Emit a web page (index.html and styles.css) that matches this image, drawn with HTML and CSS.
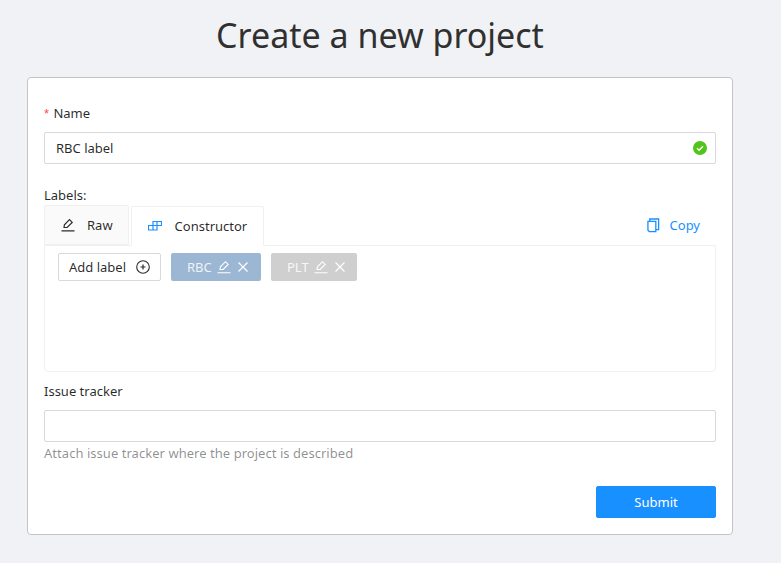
FILE: index.html

```html
<!DOCTYPE html>
<html lang="en">
<head>
  <meta charset="UTF-8">
  <title>Create a new project</title>
  <link rel="stylesheet" href="styles.css">
</head>
<body>
  <div class="page">
    <h1 class="title">Create a new project</h1>
    <form class="card">
      <div class="field-label name-label"><span class="req">*</span> Name</div>
      <div class="input-wrap">
        <input class="input" type="text" value="RBC label">
        <span class="check">
          <svg viewBox="0 0 14 14" width="14" height="14"><circle cx="7" cy="7" r="7" fill="#52c41a"/><path d="M4 7.2l2.1 2.1L10 5.2" fill="none" stroke="#fff" stroke-width="1.4"/></svg>
        </span>
      </div>

      <div class="field-label labels-label">Labels:</div>
      <div class="tabs">
        <div class="tab tab-raw">
          <svg class="tab-icon" viewBox="0 0 14 14" width="14" height="14"><path d="M3 9.500l.4-2.700L8.500 1.700l2.700 2.700-5.100 5.100zM.5 12.800h13" fill="none" stroke="#2b2b2b" stroke-width="1.200"/></svg>
          Raw
        </div>
        <div class="tab active">
          <svg class="tab-icon" viewBox="0 0 14 14" width="14" height="14"><path d="M5 2.500h4v4H5zM9 2.500h4.500v4H9zM.5 6.500H5v4.500H.5zM5 6.500h4v4.500H5z" fill="none" stroke="#1890ff" stroke-width="1.200"/></svg>
          Constructor
        </div>
        <a class="copy" href="#">
          <svg viewBox="0 0 14 16" width="13" height="15"><path d="M1 3.500h8.500v11H2.500L1 13zM3 3.500V1h9.500v11.500h-3" fill="none" stroke="#1890ff" stroke-width="1.400"/></svg>
          Copy
        </a>
      </div>
      <div class="tab-body">
        <button class="add-label" type="button">
          Add label
          <svg viewBox="0 0 14 14" width="14" height="14"><circle cx="7" cy="7" r="6.300" fill="none" stroke="#2b2b2b" stroke-width="1.100"/><path d="M7 4.500v5M4.500 7h5" stroke="#2b2b2b" stroke-width="1.200"/></svg>
        </button>
        <div class="chip chip-rbc">
          RBC
          <svg viewBox="0 0 14 14" width="14" height="14"><path d="M3 9.500l.4-2.700L8.500 1.700l2.700 2.700-5.100 5.100zM.5 12.800h13" fill="none" stroke="#fff" stroke-width="1.100"/></svg>
          <svg class="x" viewBox="0 0 12 12" width="12" height="12"><path d="M1.500 1.500l9 9M10.500 1.500l-9 9" stroke="#fff" stroke-width="1.200"/></svg>
        </div>
        <div class="chip chip-plt">
          PLT
          <svg viewBox="0 0 14 14" width="14" height="14"><path d="M3 9.500l.4-2.700L8.500 1.700l2.700 2.700-5.100 5.100zM.5 12.800h13" fill="none" stroke="#fff" stroke-width="1.100"/></svg>
          <svg class="x" viewBox="0 0 12 12" width="12" height="12"><path d="M1.500 1.500l9 9M10.500 1.500l-9 9" stroke="#fff" stroke-width="1.200"/></svg>
        </div>
      </div>

      <div class="field-label tracker-label">Issue tracker</div>
      <input class="input" type="text">
      <div class="hint">Attach issue tracker where the project is described</div>

      <div class="actions">
        <button class="submit" type="button">Submit</button>
      </div>
    </form>
  </div>
</body>
</html>
```

FILE: styles.css

```css
html, body {
  margin: 0;
  height: 100%;
}
body {
  background: #f0f2f5;
  font-family: "Noto Sans", sans-serif;
  font-size: 13px;
  color: rgba(0,0,0,0.85);
  overflow: hidden;
}
.page {
  width: 706px;
  margin-left: 27px;
}
.title {
  margin: 0;
  height: 77px;
  line-height: 70px;
  text-align: center;
  font-size: 34px;
  font-weight: 400;
  color: #303030;
}
.card {
  box-sizing: border-box;
  height: 458px;
  background: #fff;
  border: 1px solid #c4c4c4;
  border-radius: 4px;
  padding: 16px;
}
.field-label {
  line-height: 22px;
}
.name-label {
  margin-top: 8px;
  margin-bottom: 7px;
}
.req {
  color: #ff4d4f;
  font-family: "Liberation Sans", sans-serif;
  margin-right: 1px;
}
.input-wrap {
  position: relative;
}
.input {
  display: block;
  box-sizing: border-box;
  width: 100%;
  height: 32px;
  padding: 0 11px;
  border: 1px solid #d9d9d9;
  border-radius: 2px;
  background: #fff;
  font: inherit;
  color: inherit;
}
.check {
  position: absolute;
  right: 9px;
  top: 9px;
  line-height: 0;
}
.labels-label {
  margin-top: 20px;
}
.tabs {
  display: flex;
  align-items: flex-end;
  gap: 2px;
  height: 39px;
}
.tab {
  box-sizing: border-box;
  display: flex;
  align-items: center;
  height: 40px;
  padding: 0 16px;
  border: 1px solid #f0f0f0;
  border-radius: 2px 2px 0 0;
  background: #fafafa;
}
.tab-raw {
  padding-right: 15px;
}
.tab.active {
  background: #fff;
  border-bottom-color: #fff;
  position: relative;
  z-index: 1;
  margin-bottom: -1px;
}
.tab.active .tab-icon {
  margin-right: 13px;
}
.tab-icon {
  margin-right: 12px;
}
.copy {
  display: flex;
  align-items: center;
  gap: 10px;
  margin-left: auto;
  margin-right: 16px;
  height: 40px;
  color: #1890ff;
  text-decoration: none;
}
.tab-body {
  box-sizing: border-box;
  display: flex;
  align-items: flex-start;
  gap: 10px;
  height: 127px;
  padding: 7px 13px;
  border: 1px solid #f0f0f0;
  border-radius: 0 0 4px 4px;
}
.add-label {
  display: flex;
  align-items: center;
  justify-content: center;
  gap: 10px;
  box-sizing: border-box;
  width: 103px;
  height: 28px;
  padding: 0;
  border: 1px solid #d9d9d9;
  border-radius: 2px;
  background: #fff;
  font: inherit;
  color: inherit;
}
.chip {
  display: flex;
  align-items: center;
  box-sizing: border-box;
  height: 28px;
  padding-left: 16px;
  border-radius: 2px;
  color: rgba(255,255,255,0.85);
  gap: 5px;
}
.chip .x {
  margin-left: 1px;
}
.chip-rbc {
  width: 90px;
  background: #9cb7d4;
}
.chip-plt {
  width: 86px;
  background: #cfcfcf;
}
.tracker-label {
  margin-top: 8px;
  margin-bottom: 8px;
}
.hint {
  line-height: 22px;
  letter-spacing: 0.04px;
  color: rgba(0,0,0,0.45);
}
.actions {
  display: flex;
  justify-content: flex-end;
  margin-top: 22px;
}
.submit {
  width: 120px;
  height: 32px;
  border: 1px solid #1890ff;
  border-radius: 2px;
  background: #1890ff;
  color: #fff;
  font: inherit;
}
```
